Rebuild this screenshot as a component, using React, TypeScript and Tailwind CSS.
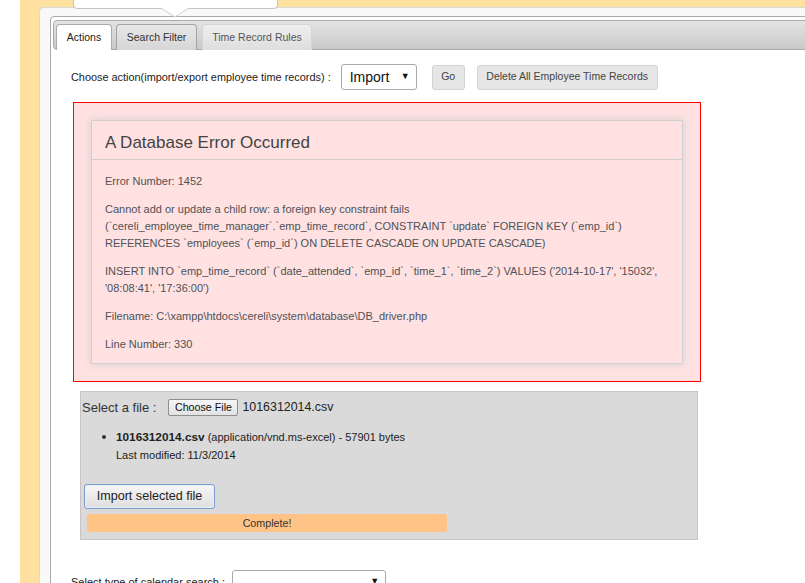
import React from "react";

function Tabs() {
  return (
    <div className="h-[30px] border border-[#aaaaaa] rounded-[4px] bg-gradient-to-b from-[#e4e4e4] to-[#c9c9c9] flex items-end pl-[2px]">
      <div className="w-[56px] h-[26px] -mb-px bg-white border border-b-0 border-[#aaaaaa] rounded-t-[4px] flex items-center justify-center text-[10.5px] text-[#212121]">
        Actions
      </div>
      <div className="ml-[4px] w-[81px] h-[26px] -mb-px bg-gradient-to-b from-[#e8e8e8] to-[#d6d6d6] border border-b-0 border-[#a3a3a3] rounded-t-[4px] flex items-center justify-center text-[10.5px] text-[#333]">
        Search Filter
      </div>
      <div className="ml-[5px] w-[110px] h-[26px] -mb-px bg-gradient-to-b from-[#efefef] to-[#dedede] border border-b-0 border-[#d6d6d6] rounded-t-[4px] flex items-center justify-center text-[10.5px] text-[#555]">
        Time Record Rules
      </div>
    </div>
  );
}

function ErrorBox() {
  const p = "text-[11px] leading-[16.7px] text-[#4f5155] whitespace-nowrap";
  return (
    <div className="mt-[12px] ml-[2px] w-[628px] border border-[#ff0000] bg-[#ffe1e1] p-[17px]">
      <div className="border border-[#d0d0d0] shadow-[0_0_8px_#d0d0d0] bg-[#ffe1e1]">
        <div className="border-b border-[#d0d0d0] pt-[12px] pb-[6px] pl-[13px] text-[17px] leading-[20px] text-[#444]">
          A Database Error Occurred
        </div>
        <div className="pl-[13px] pt-[13px] pb-[10px] flex flex-col gap-[11.6px]">
          <div className={p}>Error Number: 1452</div>
          <div className={p}>
            <div>Cannot add or update a child row: a foreign key constraint fails</div>
            <div>(`cereli_employee_time_manager`.`emp_time_record`, CONSTRAINT `update` FOREIGN KEY (`emp_id`)</div>
            <div>REFERENCES `employees` (`emp_id`) ON DELETE CASCADE ON UPDATE CASCADE)</div>
          </div>
          <div className={p}>
            <div>INSERT INTO `emp_time_record` (`date_attended`, `emp_id`, `time_1`, `time_2`) VALUES ('2014-10-17', '15032',</div>
            <div>'08:08:41', '17:36:00')</div>
          </div>
          <div className={p}>{"Filename: C:\\xampp\\htdocs\\cereli\\system\\database\\DB_driver.php"}</div>
          <div className={p}>Line Number: 330</div>
        </div>
      </div>
    </div>
  );
}

function FileBox() {
  return (
    <div className="mt-[9px] ml-[9px] w-[618px] h-[149px] border border-[#cbc3c3] bg-[#dadada] pt-[7px]">
      <div className="flex items-center h-[17px] pl-[1px]">
        <span className="text-[13px] text-[#333]">Select a file :</span>
        <div className="ml-[12px] w-[70px] h-[17px] border border-[#8e8e8e] rounded-[2px] bg-gradient-to-b from-[#f6f6f6] to-[#e2e2e2] flex items-center justify-center text-[10.7px] text-[#111]">
          Choose File
        </div>
        <span className="ml-[4px] text-[12.4px] text-[#222]">1016312014.csv</span>
      </div>
      <div className="mt-[12px] flex">
        <div className="ml-[21px] mt-[7px] w-[4px] h-[4px] rounded-full bg-[#333]" />
        <div className="ml-[10px] text-[11px] leading-[18px] text-[#222]">
          <div>
            <span className="font-bold text-[11.8px]">1016312014.csv</span> (application/vnd.ms-excel) - 57901 bytes
          </div>
          <div>Last modified: 11/3/2014</div>
        </div>
      </div>
      <div className="mt-[20px] ml-[3px] w-[131px] h-[25px] border border-[#7c9dd1] rounded-[3px] bg-gradient-to-b from-[#f7f7f7] to-[#dedede] flex items-center justify-center text-[12.6px] text-[#222] shadow-[inset_0_0_0_1px_#e6eefb]">
        Import selected file
      </div>
      <div className="mt-[5px] ml-[6px] w-[360px] h-[18px] rounded-[3px] bg-[#ffc385] flex items-center justify-center text-[10.7px] text-[#333]">
        Complete!
      </div>
    </div>
  );
}

export default function App() {
  return (
    <div className="relative w-[805px] h-[583px] overflow-hidden bg-white flex font-['Liberation_Sans',Arial,sans-serif]">
      <div className="w-[20px] shrink-0 bg-white" />
      <div className="flex-1 min-w-0 bg-[#fee0a0] pt-[7px] pl-[19px]">
        <div className="w-[calc(100%+20px)] h-[700px] bg-[#f9f9f9] border border-[#d8d8d8] rounded-tl-[5px] pt-[8px] pl-[10px]">
          <div className="h-full bg-white border border-[#aaaaaa] rounded-[4px] pt-[3px] px-[2px]">
            <Tabs />
            <div className="pt-[14px] pl-[18px]">
              <div className="flex items-center h-[26px]">
                <span className="text-[10.9px] text-[#222]">Choose action(import/export employee time records) :</span>
                <div className="ml-[10px] w-[76px] h-[26px] bg-white border border-[#a9a9a9] rounded-[3px] flex items-center pl-[8px] pr-[6px] justify-between">
                  <span className="text-[14px] text-[#111]">Import</span>
                  <span className="text-[9px] text-[#111]">▼</span>
                </div>
                <div className="ml-[15px] w-[33px] h-[25px] bg-[#e6e6e6] border border-[#d3d3d3] rounded-[3px] flex items-center justify-center text-[10.5px] text-[#444]">
                  Go
                </div>
                <div className="ml-[12px] w-[181px] h-[25px] bg-[#e6e6e6] border border-[#d3d3d3] rounded-[3px] flex items-center justify-center text-[10.5px] text-[#444]">
                  Delete All Employee Time Records
                </div>
              </div>
              <ErrorBox />
              <FileBox />
              <div className="mt-[30px] flex items-center h-[24px]">
                <span className="text-[11px] text-[#222]">Select type of calendar search :</span>
                <div className="ml-[7px] w-[154px] h-[24px] bg-white border border-[#a9a9a9] rounded-[3px] flex items-center justify-end pr-[6px]">
                  <span className="text-[9px] text-[#111]">▼</span>
                </div>
              </div>
            </div>
          </div>
        </div>
      </div>
      <div className="absolute left-[73px] top-[-10px] w-[205px] h-[19px] bg-white border border-[#c4c4c4] rounded-b-[4px]" />
      <svg className="absolute left-[161px] top-[8px]" width="28" height="10" viewBox="0 0 28 10">
        <polygon points="0,0 14,9 28,0" fill="#ffffff" />
        <polyline points="0,0 14,9 28,0" fill="none" stroke="#cfcfcf" strokeWidth="1" />
      </svg>
    </div>
  );
}
